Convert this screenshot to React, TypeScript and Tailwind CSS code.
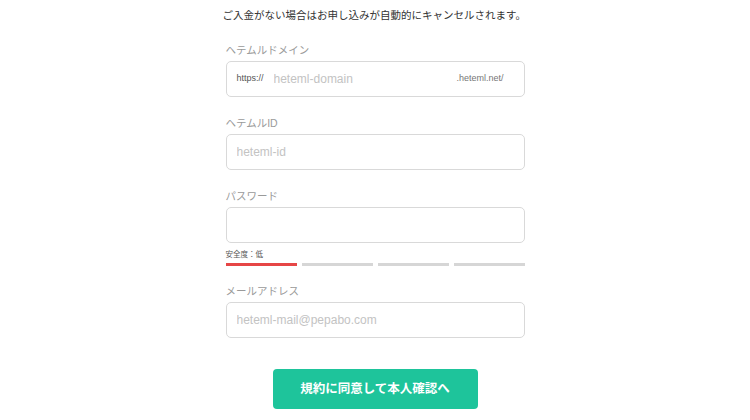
export default function App() {
  const bars = ['bg-[#e64646]', 'bg-[#d6d6d6]', 'bg-[#d6d6d6]', 'bg-[#d6d6d6]'];

  return (
    <div className="w-[750px] h-[420px] overflow-hidden bg-white font-['Liberation_Sans','Noto_Sans_CJK_JP',sans-serif]">
      <div className="w-[299px] mx-auto pt-[7px] flex flex-col">
        {/* Notice */}
        <p className="text-[10.5px] leading-[16px] text-[#333] text-center whitespace-nowrap -ml-[3px]">
          ご入金がない場合はお申し込みが自動的にキャンセルされます。
        </p>

        {/* Domain */}
        <label className="mt-[19px] mb-[3px] text-[10.5px] leading-[16px] text-[#9a9a9a]">
          ヘテムルドメイン
        </label>
        <div className="h-[36px] border border-[#d9d9d9] rounded-[5px] flex items-center pl-[10px] pr-[20px]">
          <span className="text-[9px] text-[#555]">https://</span>
          <input
            className="flex-1 min-w-0 ml-[10px] text-[12px] outline-none placeholder:text-[#c3c3c3]"
            placeholder="heteml-domain"
          />
          <span className="text-[9px] text-[#777]">.heteml.net/</span>
        </div>

        {/* ID */}
        <label className="mt-[18px] mb-[3px] text-[10.5px] leading-[16px] text-[#9a9a9a]">
          ヘテムルID
        </label>
        <input
          className="h-[36px] border border-[#d9d9d9] rounded-[5px] px-[10px] text-[12px] outline-none placeholder:text-[#c3c3c3]"
          placeholder="heteml-id"
        />

        {/* Password */}
        <label className="mt-[18px] mb-[3px] text-[10.5px] leading-[16px] text-[#9a9a9a]">
          パスワード
        </label>
        <input
          type="password"
          className="h-[36px] border border-[#d9d9d9] rounded-[5px] px-[10px] text-[12px] outline-none"
        />
        <span className="mt-[7px] text-[7.5px] leading-[10px] text-[#555]">安全度：低</span>
        <div className="mt-[3px] flex gap-[5px]">
          {bars.map((c, i) => (
            <div key={i} className={`h-[3px] flex-1 ${c}`} />
          ))}
        </div>

        {/* Email */}
        <label className="mt-[17px] mb-[3px] text-[10.5px] leading-[16px] text-[#9a9a9a]">
          メールアドレス
        </label>
        <input
          className="h-[36px] border border-[#d9d9d9] rounded-[5px] px-[10px] text-[12px] outline-none placeholder:text-[#c3c3c3]"
          placeholder="heteml-mail@pepabo.com"
        />

        <button className="mt-[31px] self-center w-[205px] h-[40px] rounded-[4px] bg-[#1ec49b] text-white text-[12.5px] font-bold">
          規約に同意して本人確認へ
        </button>
      </div>
    </div>
  );
}
